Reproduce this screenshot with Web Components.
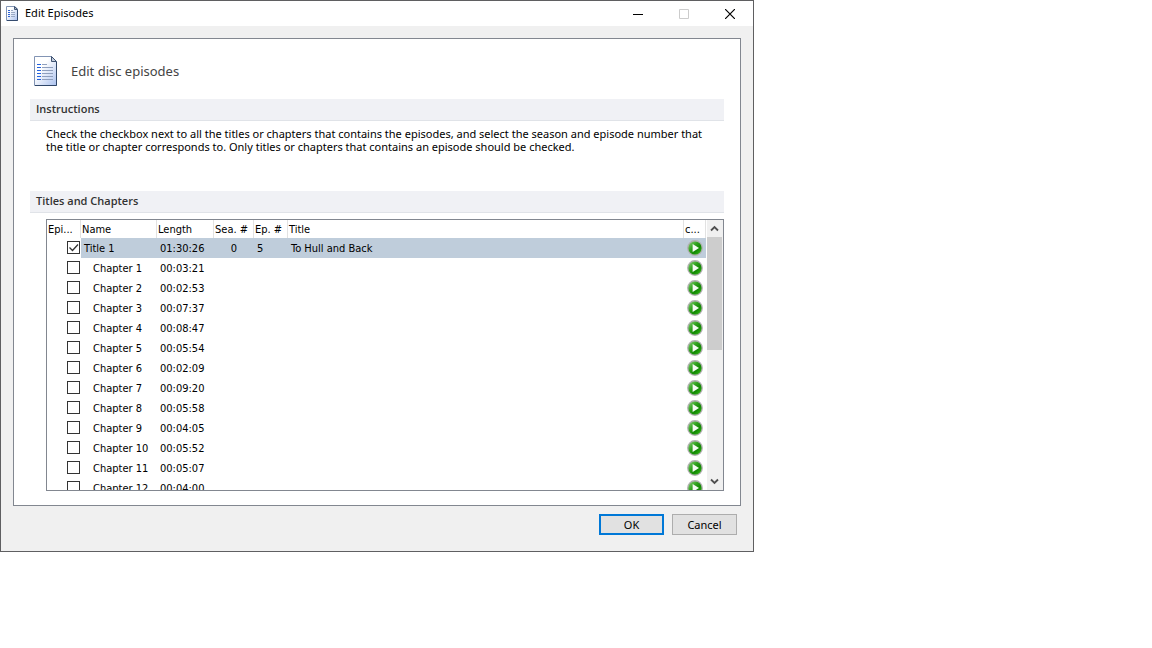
<!DOCTYPE html>
<html lang="en">
<head>
<meta charset="utf-8">
<title>Edit Episodes</title>
<style>
    body {
        margin: 0;
        background: #fff;
        color: #000;
        font: 11px/13px "Noto Sans", "Open Sans", sans-serif;
    }
</style>
</head>
<body>
<dialog-window>
    <document-icon slot="icon" size="small"></document-icon>
    <span slot="title">Edit Episodes</span>

    <page-header>
        <document-icon slot="icon"></document-icon>
        Edit disc episodes
    </page-header>
    <form-section>
        <span slot="heading">Instructions</span>
        <instruction-text>Check the checkbox next to all the titles or chapters that contains the episodes, and select the season and episode number that the title or chapter corresponds to. Only titles or chapters that contains an episode should be checked.</instruction-text>
    </form-section>
    <form-section>
        <span slot="heading">Titles and Chapters</span>
        <episode-list></episode-list>
    </form-section>

    <dialog-button slot="actions" primary>OK</dialog-button>
    <dialog-button slot="actions">Cancel</dialog-button>
</dialog-window>

<script>
class DocumentIcon extends HTMLElement {
    constructor() {
        super();
        this.attachShadow({ mode: 'open' });
    }

    connectedCallback() {
        const small = this.getAttribute('size') === 'small';
        this.shadowRoot.innerHTML = `
            <style>
                :host { display: block; flex: none; }
                svg { display: block; }
            </style>
            ${small ? this.smallIcon() : this.largeIcon()}
        `;
    }

    smallIcon() {
        return `
            <svg width="12" height="15" viewBox="0 0 12 15" aria-hidden="true">
                <defs><linearGradient id="p" x1="0" y1="0" x2="1" y2="1"><stop offset=".3" stop-color="#fff"/><stop offset="1" stop-color="#a9c0ee"/></linearGradient></defs>
                <path d="M.5 .5H9L11.5 3V14.5H.5Z" fill="url(#p)" stroke="#8295b5"/>
                <path d="M11.5 4V14.5H1" fill="none" stroke="#344b6e"/>
                <path d="M8.5 .5V3.5H11.5Z" fill="#a9b6ca" stroke="#445875"/>
                <path d="M2 4.5H4M2 6.5H4M2 8.5H4M2 10.5H4" stroke="#2c63d8"/>
                <path d="M5 4.5H7M5 6.5H9M5 8.5H9M5 10.5H9" stroke="#9aa9c4"/>
            </svg>`;
    }

    largeIcon() {
        return `
            <svg width="24" height="31" viewBox="0 0 24 31" aria-hidden="true">
                <defs><linearGradient id="p" x1="0" y1="0" x2="1" y2="1"><stop offset=".35" stop-color="#fff"/><stop offset="1" stop-color="#a9c0ee"/></linearGradient></defs>
                <path d="M.5 .5H17.5L22.5 5.5V29.5H.5Z" fill="url(#p)" stroke="#8294b4"/>
                <path d="M22.5 6V29.5H1" fill="none" stroke="#2f4668"/>
                <path d="M17.5 .5V5.5H22.5Z" fill="#c3cddd" stroke="#3f5372"/>
                <path d="M3 8.5H7M3 11.5H7M3 14.5H7M3 17.5H7M3 20.5H7M3 23.5H7" stroke="#2462df"/>
                <path d="M8 8.5H13M8 11.5H19M8 14.5H19M8 17.5H19M8 20.5H19M8 23.5H19" stroke="#8f9fbd"/>
            </svg>`;
    }
}

class DialogWindow extends HTMLElement {
    constructor() {
        super();
        this.attachShadow({ mode: 'open' });
        this.shadowRoot.innerHTML = `
            <style>
                :host {
                    display: block;
                    box-sizing: border-box;
                    width: 100%;
                    max-width: 754px;
                    border: 1px solid #5f5f61;
                    background: #f0f0f0;
                }
                header {
                    display: flex;
                    align-items: stretch;
                    height: 25px;
                    background: #fff;
                }
                .caption {
                    display: flex;
                    align-items: center;
                    gap: 7px;
                    flex: 1;
                    padding-left: 5px;
                }
                ::slotted([slot="title"]) { padding-bottom: 2px; }
                header button {
                    display: flex;
                    align-items: center;
                    justify-content: center;
                    width: 46px;
                    padding: 0;
                    border: 0;
                    background: none;
                }
                header button:hover:enabled { background: #e5e5e5; }
                main {
                    margin: 12px 12px 8px;
                    padding: 0 16px 14px;
                    border: 1px solid #828790;
                    background: #fff;
                }
                footer {
                    display: flex;
                    justify-content: flex-end;
                    gap: 8px;
                    padding: 0 16px 16px;
                }
            </style>
            <header>
                <div class="caption"><slot name="icon"></slot><slot name="title"></slot></div>
                <button type="button" aria-label="Minimize">
                    <svg width="10" height="10"><path d="M0 5.5H10" stroke="#000"/></svg>
                </button>
                <button type="button" aria-label="Maximize" disabled>
                    <svg width="10" height="10"><path d="M.5 .5H9.5V9.5H.5Z" fill="none" stroke="#ccc"/></svg>
                </button>
                <button type="button" aria-label="Close">
                    <svg width="10" height="10"><path d="M0 0L10 10M10 0L0 10" stroke="#000" stroke-width="1.2"/></svg>
                </button>
            </header>
            <main><slot></slot></main>
            <footer><slot name="actions"></slot></footer>
        `;
    }
}

class PageHeader extends HTMLElement {
    constructor() {
        super();
        this.attachShadow({ mode: 'open' });
        this.shadowRoot.innerHTML = `
            <style>
                :host {
                    display: flex;
                    align-items: center;
                    gap: 13px;
                    padding: 17px 4px 12px;
                }
                h1 {
                    margin: 0;
                    padding-bottom: 2px;
                    color: #444;
                    font-size: 13px;
                    font-weight: 400;
                    line-height: 18px;
                }
            </style>
            <slot name="icon"></slot>
            <h1><slot></slot></h1>
        `;
    }
}

class FormSection extends HTMLElement {
    constructor() {
        super();
        this.attachShadow({ mode: 'open' });
        this.shadowRoot.innerHTML = `
            <style>
                :host { display: block; }
                h2 {
                    margin: 0;
                    padding: 0 6px 2px;
                    border-bottom: 1px solid #e0e3e8;
                    background: #f0f1f5;
                    color: #333;
                    font: 600 11px/19px "Open Sans", "Noto Sans", sans-serif;
                }
                .content { padding: 6px 0 0 16px; }
            </style>
            <h2><slot name="heading"></slot></h2>
            <div class="content"><slot></slot></div>
        `;
    }
}

class InstructionText extends HTMLElement {
    constructor() {
        super();
        this.attachShadow({ mode: 'open' });
        this.shadowRoot.innerHTML = `
            <style>
                :host { display: block; }
                p { margin: 0; padding: 0 16px 38px 0; }
            </style>
            <p><slot></slot></p>
        `;
    }
}

class DialogButton extends HTMLElement {
    constructor() {
        super();
        this.attachShadow({ mode: 'open' });
        this.shadowRoot.innerHTML = `
            <style>
                :host { display: block; }
                button {
                    display: block;
                    box-sizing: border-box;
                    min-width: 65px;
                    height: 21px;
                    padding: 0 8px;
                    border: 1px solid #adadad;
                    background: #e1e1e1;
                    color: inherit;
                    font: inherit;
                }
                :host([primary]) button { border: 2px solid #0078d7; }
            </style>
            <button type="button"><slot></slot></button>
        `;
    }
}

class PlayButton extends HTMLElement {
    constructor() {
        super();
        this.attachShadow({ mode: 'open' });
    }

    connectedCallback() {
        this.shadowRoot.innerHTML = `
            <style>
                :host { display: block; }
                button {
                    display: block;
                    margin: 0 auto;
                    padding: 0;
                    border: 0;
                    background: none;
                }
                svg { display: block; }
            </style>
            <button type="button" aria-label="Play ${this.getAttribute('for')}">
                <svg width="16" height="16" viewBox="0 0 16 16">
                    <defs>
                        <linearGradient id="g" x1="0" y1="0" x2="1" y2="1">
                            <stop offset="0" stop-color="#8ed67c"/>
                            <stop offset=".4" stop-color="#2fa01c"/>
                            <stop offset=".65" stop-color="#138a04"/>
                            <stop offset="1" stop-color="#3fc41f"/>
                        </linearGradient>
                    </defs>
                    <circle cx="8" cy="8" r="7.9" fill="#b0b0b0"/>
                    <circle cx="8" cy="8" r="6.6" fill="url(#g)"/>
                    <path d="M5.6 4V12L12 8Z" fill="#f4fbf2"/>
                </svg>
            </button>
        `;
    }
}

class ListScrollbar extends HTMLElement {
    constructor() {
        super();
        this.attachShadow({ mode: 'open' });
        this.shadowRoot.innerHTML = `
            <style>
                :host {
                    display: flex;
                    flex-direction: column;
                    flex: none;
                    width: 16px;
                    margin-left: 1px;
                    background: #f0f0f0;
                }
                button {
                    display: flex;
                    align-items: center;
                    justify-content: center;
                    height: 17px;
                    padding: 0 1px 0 0;
                    border: 0;
                    background: none;
                }
                .track { flex: 1; }
                .thumb { width: 15px; height: 48%; background: #cdcdcd; }
            </style>
            <button type="button" aria-label="Scroll up">
                <svg width="9" height="7"><path d="M1 5.5L4.5 2L8 5.5" fill="none" stroke="#505050" stroke-width="1.8"/></svg>
            </button>
            <div class="track"><div class="thumb"></div></div>
            <button type="button" aria-label="Scroll down">
                <svg width="9" height="7"><path d="M1 1.5L4.5 5L8 1.5" fill="none" stroke="#505050" stroke-width="1.8"/></svg>
            </button>
        `;
        const [up, down] = this.shadowRoot.querySelectorAll('button');
        up.addEventListener('click', () => this.step(-20));
        down.addEventListener('click', () => this.step(20));
    }

    step(amount) {
        this.dispatchEvent(new CustomEvent('scroll-step', { detail: { amount } }));
    }
}

class EpisodeList extends HTMLElement {
    constructor() {
        super();
        this.attachShadow({ mode: 'open' });
        this.shadowRoot.innerHTML = `
            <style>
                :host {
                    display: flex;
                    height: 270px;
                    border: 1px solid #828790;
                    background: #fff;
                    font: 11px/13px "DejaVu Sans Condensed", "Noto Sans", sans-serif;
                }
                .rows { flex: 1; min-width: 0; overflow: hidden; }
                table {
                    width: 100%;
                    border-collapse: separate;
                    border-spacing: 0;
                    table-layout: fixed;
                }
                .check { width: 34px; }
                .name { width: 76px; }
                .length { width: 57px; }
                .season { width: 40px; }
                .episode { width: 34px; }
                .play { width: 22px; }
                th {
                    position: sticky;
                    top: 0;
                    z-index: 2;
                    box-sizing: border-box;
                    height: 18px;
                    padding: 0 0 0 1px;
                    border-right: 1px solid #e2e2e2;
                    background: #fff;
                    font-weight: 400;
                    text-align: left;
                    white-space: nowrap;
                }
                td {
                    box-sizing: border-box;
                    height: 20px;
                    padding: 0 0 0 3px;
                    white-space: nowrap;
                }
                td:nth-child(1) { padding: 0 1px 1px 0; }
                td:nth-child(4) { padding: 0; text-align: center; }
                td:nth-child(7) { padding: 0; }
                .chapter td:nth-child(2) { padding-left: 12px; }
                .selected td:not(:first-child) { background: #bfcddb; }
                .tick { display: grid; justify-content: end; }
                .tick > * { grid-area: 1 / 1; }
                input {
                    appearance: none;
                    display: block;
                    box-sizing: border-box;
                    width: 13px;
                    height: 13px;
                    margin: 0;
                    border: 1px solid #333;
                    background: #fff;
                }
                .tick svg { display: none; pointer-events: none; z-index: 1; }
                .tick input:checked + svg { display: block; }
            </style>
            <div class="rows">
                <table>
                    <thead>
                        <tr>
                            <th class="check">Epi...</th>
                            <th class="name">Name</th>
                            <th class="length">Length</th>
                            <th class="season">Sea. #</th>
                            <th class="episode">Ep. #</th>
                            <th>Title</th>
                            <th class="play">c...</th>
                        </tr>
                    </thead>
                    <tbody></tbody>
                </table>
            </div>
            <list-scrollbar></list-scrollbar>
        `;
        this.items = [
            { name: 'Title 1', length: '01:30:26', season: '0', episode: '5', title: 'To Hull and Back', checked: true },
            ...[
                '00:03:21', '00:02:53', '00:07:37', '00:08:47', '00:05:54', '00:02:09',
                '00:09:20', '00:05:58', '00:04:05', '00:05:52', '00:05:07', '00:04:00'
            ].map((length, i) => ({ name: `Chapter ${i + 1}`, length, chapter: true }))
        ];
    }

    connectedCallback() {
        this.render();
        const rows = this.shadowRoot.querySelector('.rows');
        this.shadowRoot.querySelector('list-scrollbar').addEventListener('scroll-step', (event) => {
            rows.scrollTop += event.detail.amount;
        });
    }

    render() {
        const body = this.shadowRoot.querySelector('tbody');
        body.innerHTML = '';

        this.items.forEach((item) => {
            const row = document.createElement('tr');
            row.className = item.chapter ? 'chapter' : 'selected';
            row.innerHTML = `
                <td>
                    <div class="tick">
                        <input type="checkbox" aria-label="${item.name}" ${item.checked ? 'checked' : ''}>
                        <svg width="13" height="13"><path d="M2.5 6.5L5.5 9.5L11 3.5" fill="none" stroke="#333" stroke-width="1.3"/></svg>
                    </div>
                </td>
                <td>${item.name}</td>
                <td>${item.length}</td>
                <td>${item.season || ''}</td>
                <td>${item.episode || ''}</td>
                <td>${item.title || ''}</td>
                <td><play-button for="${item.name}"></play-button></td>
            `;
            body.appendChild(row);
        });
    }
}

customElements.define('document-icon', DocumentIcon);
customElements.define('dialog-window', DialogWindow);
customElements.define('page-header', PageHeader);
customElements.define('form-section', FormSection);
customElements.define('instruction-text', InstructionText);
customElements.define('dialog-button', DialogButton);
customElements.define('play-button', PlayButton);
customElements.define('list-scrollbar', ListScrollbar);
customElements.define('episode-list', EpisodeList);
</script>
</body>
</html>
